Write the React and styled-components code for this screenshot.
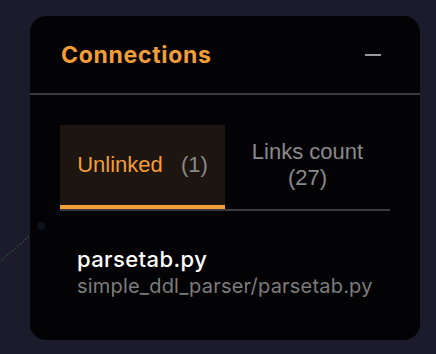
import React, { useState } from 'react';
import styled, { createGlobalStyle } from 'styled-components';

const GlobalStyle = createGlobalStyle`
    html, body {
        margin: 0;
        padding: 0;
        background: #1b1b2b;
    }
    body {
        font-family: Inter, "Noto Sans", sans-serif;
    }
`;

const tabs = [
    { id: 'unlinked', label: 'Unlinked', count: 1 },
    { id: 'links', label: 'Links count', count: 27 },
];

const files = [
    { name: 'parsetab.py', path: 'simple_ddl_parser/parsetab.py' },
];

// Graph behind the panel: one node and its edge
const GraphCanvas = () => (
    <Canvas width="436" height="354" viewBox="0 0 436 354">
        <line x1="-4" y1="265" x2="41" y2="226" stroke="#3f7a52" strokeWidth="1" strokeDasharray="1.5 2" />
        <circle cx="41" cy="226" r="4" fill="#4d7fb8" />
    </Canvas>
);

const App = () => {
    const [active, setActive] = useState('unlinked');

    return (
        <Page>
            <GlobalStyle />
            <GraphCanvas />
            <Panel>
                <Header>
                    <Title>Connections</Title>
                    <CollapseButton aria-label="Collapse">
                        <MinusBar />
                    </CollapseButton>
                </Header>
                <Body>
                    <TabList>
                        {tabs.map((tab) => (
                            <Tab
                                key={tab.id}
                                $active={active === tab.id}
                                onClick={() => setActive(tab.id)}
                            >
                                <TabLabel $active={active === tab.id}>{tab.label}</TabLabel>{' '}
                                <Count $spaced={active === tab.id}>({tab.count})</Count>
                            </Tab>
                        ))}
                    </TabList>
                    <FileList>
                        {files.map((file) => (
                            <FileItem key={file.path}>
                                <FileName>{file.name}</FileName>
                                <FilePath>{file.path}</FilePath>
                            </FileItem>
                        ))}
                    </FileList>
                </Body>
            </Panel>
        </Page>
    );
};

export default App;


// Styled Components

const Page = styled.div`
    position: relative;
    width: 436px;
    height: 354px;
    padding: 16px 0 0 30px;
    box-sizing: border-box;
    overflow: hidden;
`;

const Canvas = styled.svg`
    position: absolute;
    left: 0;
    top: 0;
`;

const Panel = styled.div`
    position: relative;
    width: 390px;
    height: 324px;
    border-radius: 16px;
    background: rgba(0, 0, 0, 0.86);
    display: flex;
    flex-direction: column;
    overflow: hidden;
`;

const Header = styled.div`
    height: 77px;
    flex-shrink: 0;
    display: flex;
    align-items: center;
    justify-content: space-between;
    padding: 0 39px 0 31px;
    border-bottom: 2px solid #3a3a3c;
`;

const Title = styled.h2`
    margin: 0;
    font-family: Inter, "Noto Sans", sans-serif;
    font-size: 23px;
    font-weight: 700;
    color: #f29d38;
    letter-spacing: 0.7px;
`;

const CollapseButton = styled.button`
    background: none;
    border: none;
    padding: 0;
    width: 16px;
    height: 16px;
    display: flex;
    align-items: center;
    cursor: pointer;
`;

const MinusBar = styled.span`
    display: block;
    width: 16px;
    height: 2px;
    background: #9a9a9a;
`;

const Body = styled.div`
    padding: 30px 30px 0;
`;

const TabList = styled.div`
    display: grid;
    grid-template-columns: 1fr 1fr;
    border-bottom: 2px solid #3a3a3c;
`;

const Tab = styled.button`
    height: 84px;
    padding: 0 10px;
    border: none;
    border-bottom: 4px solid ${({ $active }) => ($active ? '#f29d38' : 'transparent')};
    background: ${({ $active }) => ($active ? '#1c1510' : 'transparent')};
    font-family: "Liberation Sans", Arial, sans-serif;
    font-size: 22px;
    line-height: 26px;
    color: #8a8a8a;
    text-align: center;
    cursor: pointer;
`;

const TabLabel = styled.span`
    white-space: nowrap;
    color: ${({ $active }) => ($active ? '#f29d38' : '#8a8a8a')};
`;

const Count = styled.span`
    margin-left: ${({ $spaced }) => ($spaced ? '12px' : '0')};
`;

const FileList = styled.ul`
    list-style: none;
    margin: 0;
    padding: 0;
`;

const FileItem = styled.li`
    padding: 35px 17px 0;
`;

const FileName = styled.div`
    font-family: Inter, "Noto Sans", sans-serif;
    font-size: 22px;
    font-weight: 500;
    line-height: 27px;
    letter-spacing: 0.4px;
    color: #ffffff;
`;

const FilePath = styled.div`
    font-family: Inter, "Noto Sans", sans-serif;
    font-size: 20px;
    line-height: 27px;
    letter-spacing: 0.2px;
    color: #7c7c7c;
`;
